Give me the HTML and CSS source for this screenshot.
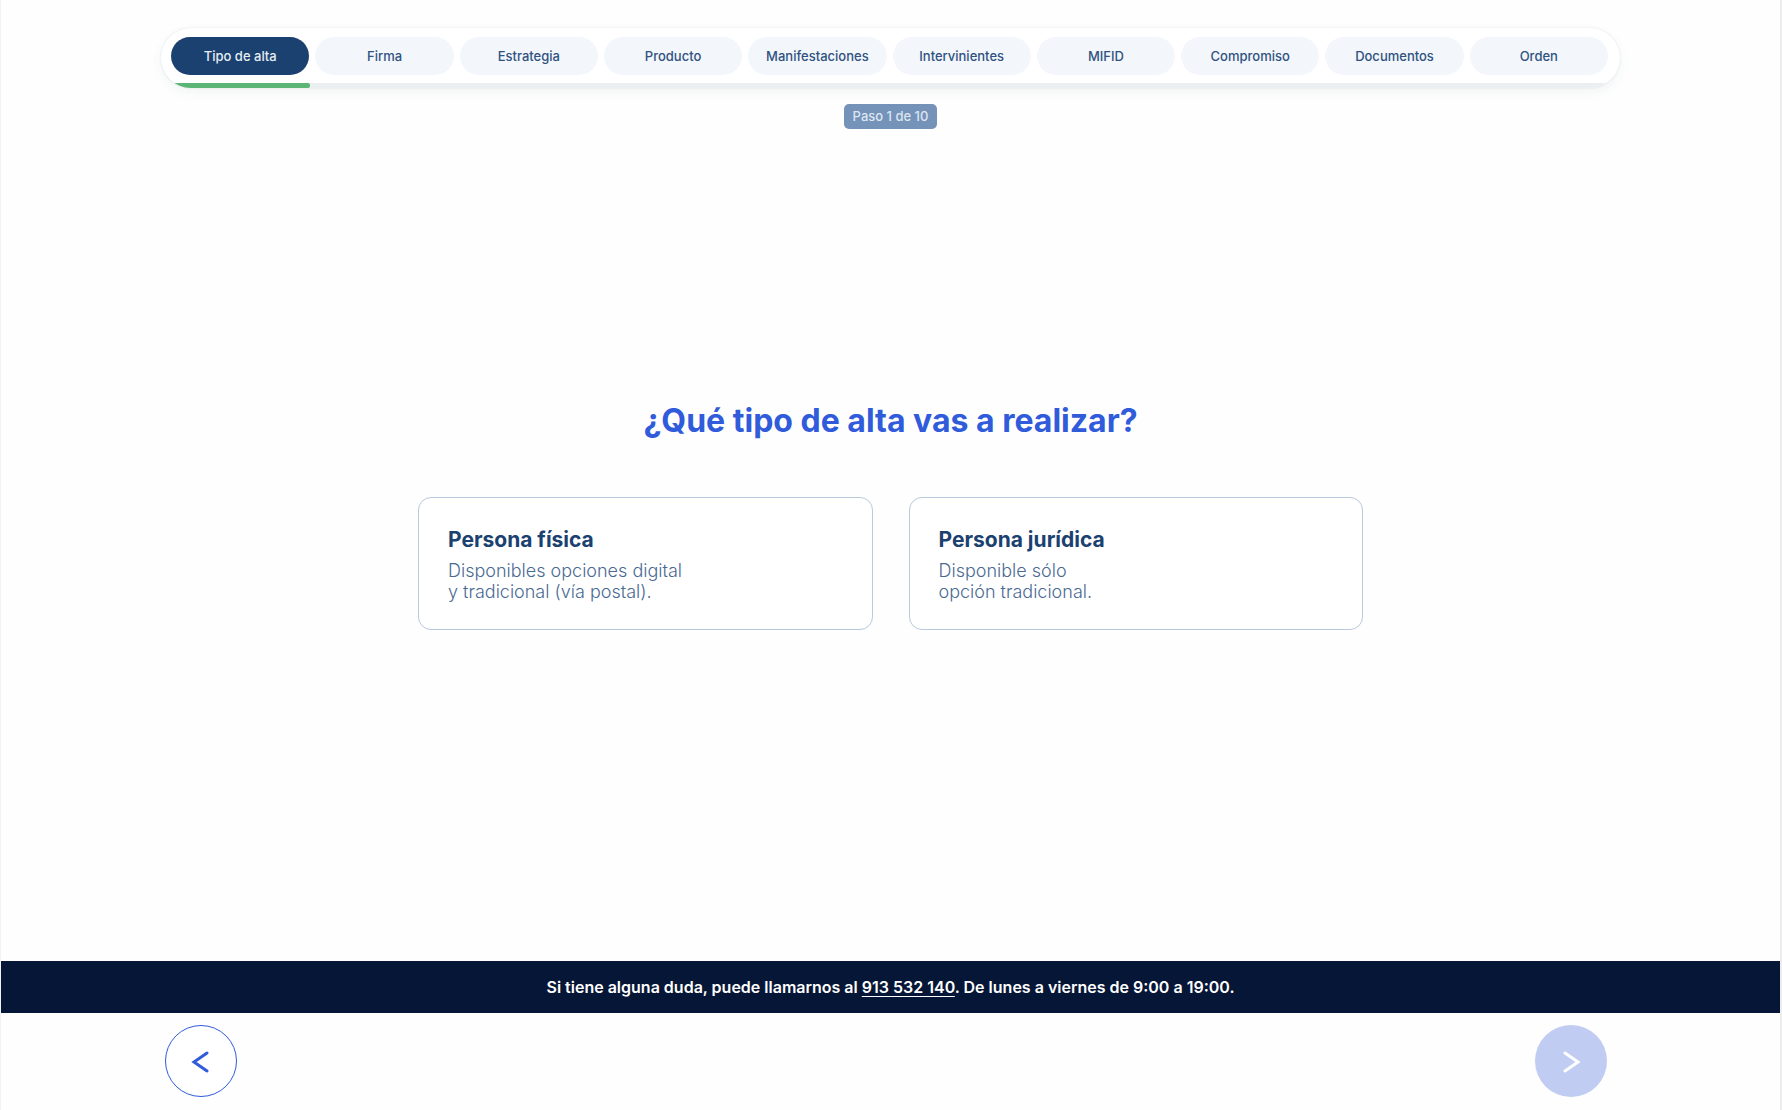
FILE: index.html
```html
<!DOCTYPE html>
<html lang="es">
<head>
  <meta charset="utf-8">
  <meta name="viewport" content="width=device-width, initial-scale=1">
  <title>Tipo de alta</title>
  <link rel="stylesheet" href="styles.css">
</head>
<body>
  <div class="page">
    <header class="wizard">
      <nav class="stepper" aria-label="Pasos del alta">
        <ol class="steps">
          <li class="step"><button type="button" class="pill pill-active" aria-current="step">Tipo de alta</button></li>
          <li class="step"><button type="button" class="pill">Firma</button></li>
          <li class="step"><button type="button" class="pill">Estrategia</button></li>
          <li class="step"><button type="button" class="pill">Producto</button></li>
          <li class="step"><button type="button" class="pill">Manifestaciones</button></li>
          <li class="step"><button type="button" class="pill">Intervinientes</button></li>
          <li class="step"><button type="button" class="pill">MIFID</button></li>
          <li class="step"><button type="button" class="pill">Compromiso</button></li>
          <li class="step"><button type="button" class="pill">Documentos</button></li>
          <li class="step"><button type="button" class="pill">Orden</button></li>
        </ol>
        <div class="track"><div class="progress"></div></div>
      </nav>
      <p class="counter">Paso 1 de 10</p>
    </header>

    <main class="content">
      <h1 class="question">¿Qué tipo de alta vas a realizar?</h1>
      <div class="options">
        <button type="button" class="option">
          <span class="option-title">Persona física</span>
          <span class="option-text">Disponibles opciones digital<br>y tradicional (vía postal).</span>
        </button>
        <button type="button" class="option">
          <span class="option-title">Persona jurídica</span>
          <span class="option-text">Disponible sólo<br>opción tradicional.</span>
        </button>
      </div>
    </main>

    <footer>
      <p class="help">Si tiene alguna duda, puede llamarnos al <a class="phone" href="tel:+34913532140">913 532 140</a>. De lunes a viernes de 9:00 a 19:00.</p>
      <div class="controls">
        <button type="button" class="round round-back" aria-label="Anterior">
          <svg class="arrow" viewBox="0 0 24 24" aria-hidden="true"><path d="M18 4 5 13l13 9"/></svg>
        </button>
        <button type="button" class="round round-next" aria-label="Siguiente" disabled>
          <svg class="arrow" viewBox="0 0 24 24" aria-hidden="true"><path d="M6 4l13 9-13 9"/></svg>
        </button>
      </div>
    </footer>
  </div>
</body>
</html>
```
FILE: styles.css
```css
*,
*::before,
*::after {
  box-sizing: border-box;
}

body {
  margin: 0;
  background: #fefefe;
  color: #1a416f;
  font-family: Inter, "Open Sans", sans-serif;
}

button {
  margin: 0;
  font: inherit;
  color: inherit;
  cursor: pointer;
}

.page {
  display: flex;
  flex-direction: column;
  min-height: 100vh;
  border-left: 1px solid #f2f2f2;
  border-right: 2px solid #ededed;
}

.wizard {
  display: flex;
  flex-direction: column;
  align-items: center;
  gap: 16px;
  padding: 28px 9% 0;
}

.stepper {
  width: 100%;
  overflow: hidden;
  border-radius: 30px;
  background: #fff;
  box-shadow: 0 0 2px rgba(26, 65, 111, 0.14), 0 4px 12px rgba(26, 90, 80, 0.06);
}

.steps {
  display: flex;
  gap: 6px;
  margin: 0;
  padding: 9px 12px 8px 10px;
  list-style: none;
}

.step {
  flex: 1 1 0;
  min-width: 0;
}

.pill {
  display: block;
  width: 100%;
  height: 38px;
  padding: 0;
  border: 0;
  border-radius: 19px;
  background: #f3f6fb;
  color: #2f527f;
  font-size: 13px;
  font-weight: 500;
}

.pill-active {
  background: #1a416f;
  color: #e6edf5;
}

.track {
  height: 5px;
  padding: 0 12px 0 10px;
  background: #ebeff2;
}

.progress {
  width: calc(10% - 5px);
  height: 5px;
  border-radius: 0 2px 2px 0;
  background: #5bb574;
}

.counter {
  margin: 0;
  padding: 0 9px;
  border-radius: 5px;
  background: #7592b9;
  color: #dce6f1;
  font-size: 13px;
  font-weight: 500;
  line-height: 25px;
}

.content {
  flex: 1;
  display: flex;
  flex-direction: column;
  align-items: center;
  gap: 56px;
  padding: 272px 24px 80px;
}

.question {
  margin: 0;
  color: #305bdb;
  font-size: 32px;
  font-weight: 700;
  line-height: 40px;
  text-align: center;
}

.options {
  display: grid;
  grid-template-columns: 1fr 1fr;
  gap: 36px;
  width: 100%;
  max-width: 945px;
}

.option {
  display: flex;
  flex-direction: column;
  gap: 6px;
  padding: 28px 29px 27px;
  border: 1px solid #b9c8dc;
  border-radius: 13px;
  background: #fff;
  text-align: left;
}

.option-title {
  font-size: 21px;
  font-weight: 700;
  line-height: 28px;
}

.option-text {
  color: #4a6a92;
  font-size: 18px;
  font-weight: 300;
  line-height: 21px;
}

.help {
  margin: 0;
  background: #061636;
  color: #fff;
  font-size: 16px;
  font-weight: 600;
  line-height: 52px;
  text-align: center;
}

.phone {
  color: inherit;
  text-decoration-thickness: 1px;
  text-underline-offset: 3px;
}

.controls {
  display: flex;
  justify-content: space-between;
  padding: 12px 173px 13px 164px;
}

.round {
  display: flex;
  align-items: center;
  justify-content: center;
  width: 72px;
  height: 72px;
  padding: 0;
  border: 0;
  border-radius: 50%;
}

.round-back {
  border: 1px solid #305bdb;
  background: #fff;
  color: #305bdb;
}

.round-next {
  background: #c0ccf2;
  color: #fff;
}

.arrow {
  width: 24px;
  height: 24px;
  fill: none;
  stroke: currentColor;
  stroke-width: 3;
  stroke-linecap: round;
  stroke-linejoin: miter;
}
```
